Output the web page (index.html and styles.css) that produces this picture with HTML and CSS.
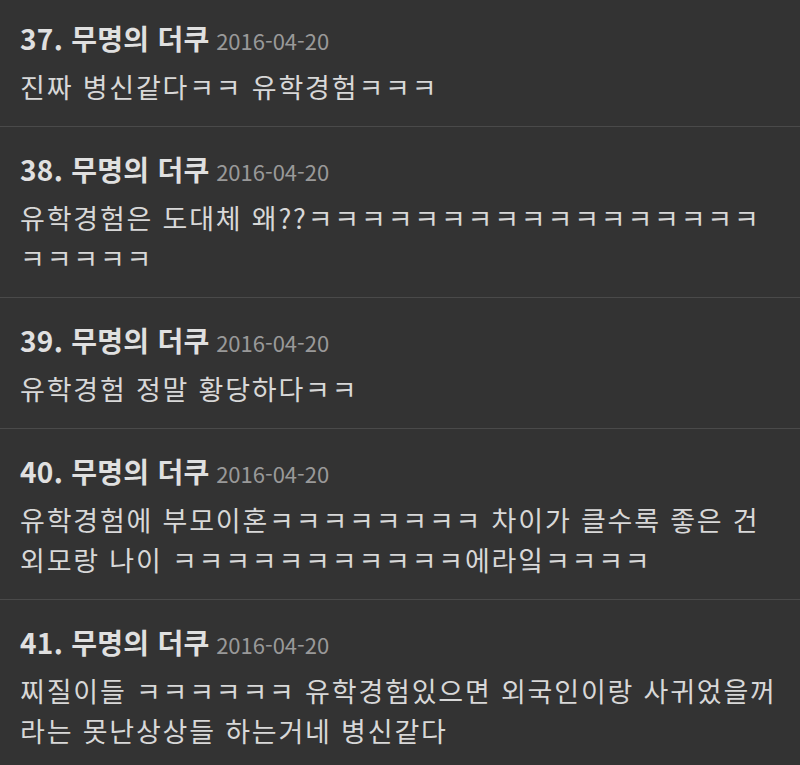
FILE: index.html
```html
<!DOCTYPE html>
<html lang="ko">

<head>
    <meta charset="UTF-8">
    <meta name="viewport" content="width=device-width, initial-scale=1.0">
    <title>댓글</title>
    <link rel="stylesheet" href="styles.css">
</head>

<body>
    <div class="comments">
        <div class="comment">
            <div class="comment-head">
                <span class="comment-name">37. 무명의 더쿠</span>
                <span class="comment-date">2016-04-20</span>
            </div>
            <div class="comment-body">진짜 병신같다ㅋㅋ 유학경험ㅋㅋㅋ</div>
        </div>
        <div class="comment">
            <div class="comment-head">
                <span class="comment-name">38. 무명의 더쿠</span>
                <span class="comment-date">2016-04-20</span>
            </div>
            <div class="comment-body">유학경험은 도대체 왜??ㅋㅋㅋㅋㅋㅋㅋㅋㅋㅋㅋㅋㅋㅋㅋㅋㅋㅋㅋㅋㅋㅋ</div>
        </div>
        <div class="comment">
            <div class="comment-head">
                <span class="comment-name">39. 무명의 더쿠</span>
                <span class="comment-date">2016-04-20</span>
            </div>
            <div class="comment-body">유학경험 정말 황당하다ㅋㅋ</div>
        </div>
        <div class="comment">
            <div class="comment-head">
                <span class="comment-name">40. 무명의 더쿠</span>
                <span class="comment-date">2016-04-20</span>
            </div>
            <div class="comment-body">유학경험에 부모이혼ㅋㅋㅋㅋㅋㅋㅋㅋ 차이가 클수록 좋은 건 외모랑 나이 ㅋㅋㅋㅋㅋㅋㅋㅋㅋㅋㅋ에라잌ㅋㅋㅋㅋ</div>
        </div>
        <div class="comment">
            <div class="comment-head">
                <span class="comment-name">41. 무명의 더쿠</span>
                <span class="comment-date">2016-04-20</span>
            </div>
            <div class="comment-body">찌질이들 ㅋㅋㅋㅋㅋㅋ 유학경험있으면 외국인이랑 사귀었을꺼라는 못난상상들 하는거네 병신같다</div>
        </div>
    </div>
</body>

</html>
```

FILE: styles.css
```css
body {
    margin: 0;
    overflow: hidden;
    background-color: #333333;
    font-family: "Noto Sans CJK KR", "Noto Sans", sans-serif;
    color: #d8d8d8;
}

.comments {
    margin-top: -4px;
}

.comment {
    padding: 18px 20px 19px;
    border-bottom: 1px solid #4a4a4a;
}

.comment-head {
    line-height: 48px;
    white-space: nowrap;
}

.comment-name {
    font-size: 28px;
    font-weight: bold;
    letter-spacing: 0.3px;
    color: #e0e0e0;
}

.comment-date {
    font-size: 22px;
    color: #999999;
    margin-left: 2px;
}

.comment-body {
    font-size: 27px;
    line-height: 40px;
    letter-spacing: 1.8px;
}
```
